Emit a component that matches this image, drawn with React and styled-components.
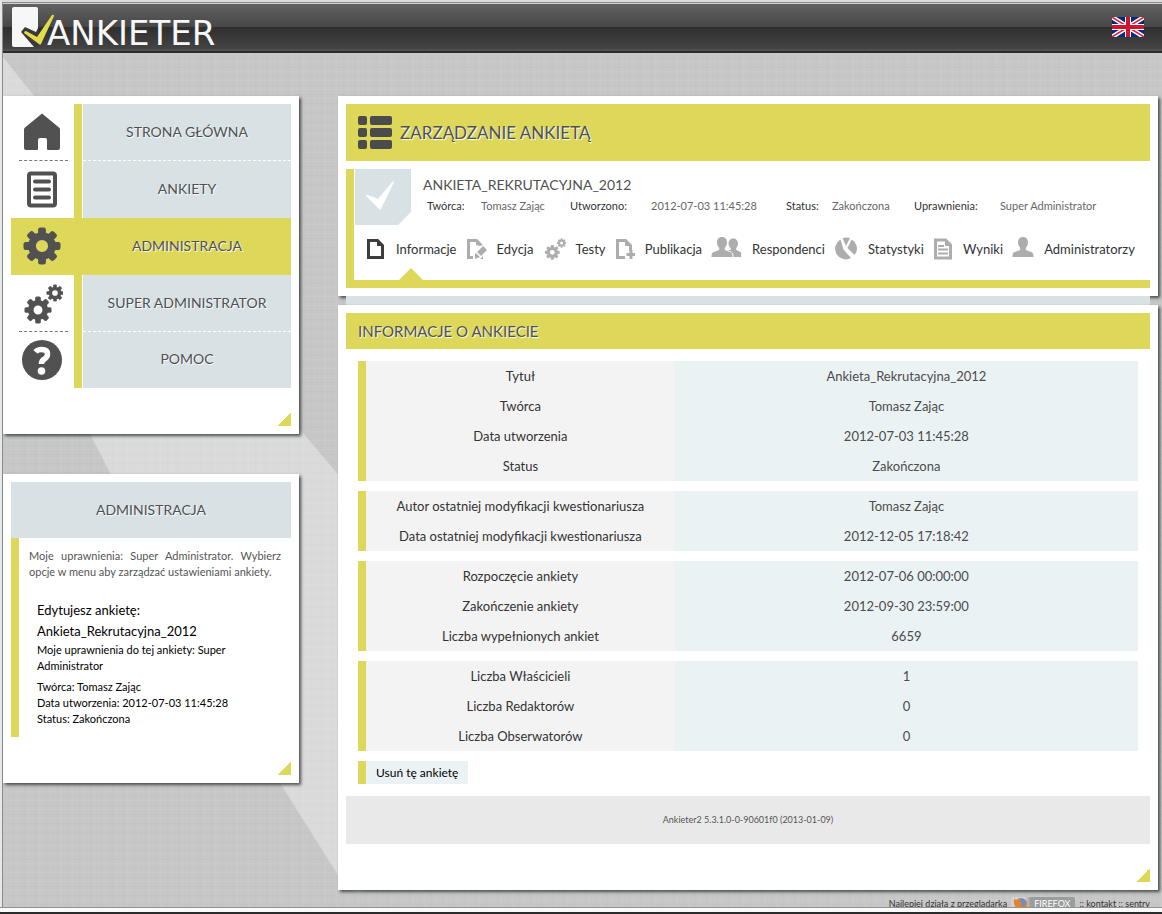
import React from 'react';
import styled, { createGlobalStyle, css } from 'styled-components';

const c = {
  lime: '#ddd85a',
  pale: '#d8e1e4',
  ink: '#515151',
  text: '#333',
  grey: '#adadad',
};

const GlobalStyle = createGlobalStyle`
  *, *::before, *::after { box-sizing: border-box; }
  body {
    margin: 0;
    background: #c5c5c5;
    color: ${c.text};
    font-family: Lato, "Liberation Sans", sans-serif;
    font-size: 14px;
  }
  a { color: inherit; text-decoration: none; }
  h1, h2, h3, p, ul, dl, dd { margin: 0; padding: 0; font-weight: 400; }
  ul { list-style: none; }
`;

const Shell = styled.div`
  position: relative;
  min-height: 100vh;
  overflow: hidden;
  border-top: 2px solid #dcdcdc;
  border-left: 2px solid #e6e9ec;
  background:
    repeating-linear-gradient(90deg, rgba(0, 0, 0, 0.015) 0 1px, transparent 1px 4px, rgba(255, 255, 255, 0.05) 4px 5px, transparent 5px 11px),
    repeating-linear-gradient(0deg, rgba(0, 0, 0, 0.015) 0 1px, transparent 1px 5px, rgba(255, 255, 255, 0.05) 5px 6px, transparent 6px 9px),
    #c7c7c7;
`;

const Frame = styled.div`
  position: relative;
  border-top: 1px solid #8b8b8b;
  border-left: 1px solid #8b8b8b;
`;

const Backdrop = styled.svg`
  position: absolute;
  left: 0;
  top: 0;
`;

const WindowEdge = styled.div`
  position: fixed;
  left: 0;
  right: 0;
  bottom: 0;
  height: 7px;
  border-top: 1px solid #939393;
  border-bottom: 2px solid #2b2b2b;
  background: #fafafa;
`;

const Header = styled.header`
  position: relative;
  display: flex;
  justify-content: space-between;
  align-items: center;
  height: 50px;
  padding: 0 18px 1px 9px;
  border-top: 1px solid #d0d0d0;
  border-bottom: 2px solid #2c2a2b;
  background: linear-gradient(#626262 0, #474747 48%, #2f2f2f 50%, #434343 94%, #565656 100%);
`;

const Logo = styled.a`
  display: flex;
  align-items: flex-end;
  height: 42px;
  color: #f7f7f7;
  font: 34px/30px "DejaVu Sans", sans-serif;
`;

const LogoMark = styled.svg`
  flex: none;
  margin-right: -11px;
`;

const Flag = styled.button`
  display: block;
  padding: 0;
  border: 0;
  background: none;
  cursor: pointer;
  svg { display: block; }
`;

const Columns = styled.div`
  position: relative;
  display: grid;
  grid-template-columns: 296px minmax(0, 1fr);
  column-gap: 39px;
  align-items: start;
  padding: 43px 4px 0 0;
`;

const Stack = styled.div`
  display: flex;
  flex-direction: column;
  gap: ${(p) => p.$gap}px;
  padding-bottom: 3px;
`;

const Panel = styled.section`
  padding: 8px;
  background: #fff;
  box-shadow: 2px 2px 3px rgba(30, 35, 35, 0.75);
`;

const Corner = styled.div`
  width: 14px;
  height: 14px;
  margin: 24px 0 0 auto;
  background: linear-gradient(135deg, transparent 50%, ${c.lime} 50%);
`;

const Menu = styled.ul`
  display: grid;
  grid-template-rows: repeat(4, minmax(57px, auto)) minmax(56px, auto);
`;

const MenuLink = styled.a`
  display: grid;
  grid-template-columns: 63px 8px 1fr;
  height: 100%;
  color: ${c.ink};
  text-shadow: 1px 1px 1px #fff;
  text-transform: uppercase;
  ${(p) => p.$active && css`background: ${c.lime};`}
`;

const MenuIcon = styled.span`
  display: flex;
  align-items: center;
  justify-content: center;
  width: 49px;
  margin: 0 6px 0 8px;
  padding-right: 4px;
  border-bottom: 1px dashed ${(p) => (p.$rule ? '#777' : 'transparent')};
`;

const MenuBar = styled.span`
  background: ${c.lime};
`;

const MenuLabel = styled.span`
  display: flex;
  align-items: center;
  justify-content: center;
  margin-left: 1px;
  padding-bottom: 2px;
  ${(p) => !p.$active && css`background: ${c.pale};`}
  border-bottom: 1px dashed ${(p) => (p.$rule ? '#fff' : 'transparent')};
`;

const SideTitle = styled.h2`
  padding: 18px 0;
  background: ${c.pale};
  color: ${c.ink};
  font-size: 14px;
  line-height: 20px;
  text-align: center;
  text-shadow: 1px 1px 1px #fff;
`;

const SideBody = styled.div`
  padding: 10px;
  border-left: 8px solid ${c.lime};
  color: #000;
  font-size: 11px;
  line-height: 16px;
`;

const Intro = styled.p`
  color: #555;
  text-align: justify;
`;

const Edited = styled.div`
  width: 200px;
  padding: 20px 0 0 8px;
`;

const EditedName = styled.h3`
  font-size: 13px;
  line-height: 21px;
`;

const EditedFacts = styled.div`
  padding-top: 5px;
`;

const Banner = styled.div`
  display: flex;
  align-items: center;
  gap: 8px;
  min-height: ${(p) => p.$height}px;
  padding: 0 12px;
  background: ${c.lime};
  color: ${c.ink};
  text-shadow: 1px 1px 1px #fff;
  h1, h2 { font-size: ${(p) => p.$size}px; line-height: 20px; }
`;

const Summary = styled.div`
  margin-top: 8px;
  border-left: 8px solid ${c.lime};
  border-bottom: 8px solid ${c.lime};
`;

const SummaryTop = styled.div`
  display: flex;
  gap: 12px;
  padding-left: 1px;
`;

const SurveyBadge = styled.svg`
  flex: none;
  display: block;
`;

const SurveyName = styled.h2`
  padding-top: 5px;
  color: ${c.ink};
  font-size: 14px;
  line-height: 21px;
`;

const Meta = styled.dl`
  display: grid;
  grid-template-columns: 54px 89px 81px 135px 46px 82px 86px auto;
  padding-left: 4px;
  font-size: 11px;
  line-height: 21px;
  white-space: nowrap;
  dd { color: #666; }
`;

const Tabs = styled.nav`
  display: flex;
  justify-content: space-between;
  padding: 8px 15px 16px 11px;
  font-size: 13px;
`;

const Tab = styled.a`
  position: relative;
  display: flex;
  align-items: center;
  gap: 10px;
  height: 31px;
  white-space: nowrap;
  ${(p) => p.$active && css`
    &::after {
      content: "";
      position: absolute;
      left: 50%;
      bottom: -16px;
      margin-left: -12px;
      border: solid transparent;
      border-width: 0 12px 12px;
      border-bottom-color: ${c.lime};
    }
  `}
`;

const TabIcon = styled.span`
  display: flex;
  flex: none;
  color: ${c.grey};
`;

const Joined = styled.div`
  height: 9px;
  margin: 0 8px;
  background: ${c.pale};
`;

const Groups = styled.div`
  display: flex;
  flex-direction: column;
  align-items: flex-start;
  gap: 10px;
  padding: 12px;
`;

const InfoTable = styled.table`
  width: 100%;
  border-left: 8px solid ${c.lime};
  border-spacing: 0;
  table-layout: fixed;
  font-size: 13px;
  text-align: center;
  th, td { height: 30px; padding: 0; line-height: 20px; }
  th { width: 40%; background: #f3f3f3; font-weight: 400; }
  td { background: #ebf2f3; color: #4c4c4c; }
`;

const RemoveButton = styled.button`
  height: 23px;
  padding: 0 10px;
  border: 0;
  border-left: 8px solid ${c.lime};
  background: #ebf2f4;
  color: #000;
  font: 12px/20px Lato, sans-serif;
  cursor: pointer;
`;

const Version = styled.footer`
  padding: 14px 0;
  background: #e9e9e9;
  color: #555;
  font-size: 9px;
  line-height: 20px;
  text-align: center;
`;

const Credits = styled.footer`
  position: relative;
  display: flex;
  justify-content: flex-end;
  align-items: center;
  gap: 4px;
  height: 21px;
  padding-right: 12px;
  font-size: 9px;
  line-height: 14px;
`;

const FirefoxBadge = styled.a`
  display: flex;
  align-items: center;
  gap: 6px;
  padding: 0 5px 0 2px;
  border-radius: 2px;
  background: linear-gradient(90deg, #d2d2d2 14px, #999d9c 20px);
  color: #fff;
`;

const angles = [0, 45, 90, 135, 180, 225, 270, 315];

function Gear({ cx, cy, r }) {
  const w = r * 0.42;
  return (
    <g transform={`translate(${cx} ${cy})`}>
      <circle r={r * 0.54} fill="none" stroke="currentColor" strokeWidth={r * 0.42} />
      {angles.map((a) => (
        <rect key={a} x={-w / 2} y={-r} width={w} height={r * 0.4} rx={r * 0.12} transform={`rotate(${a})`} fill="currentColor" />
      ))}
    </g>
  );
}

const HomeIcon = () => (
  <svg width="40" height="40" viewBox="0 0 40 40" fill="currentColor">
    <path d="M20 1.500 37 15.500q1 1 1 2V36q0 2-2 2H26q-1 0-1-1v-9q0-2-2-2h-5q-2 0-2 2v9q0 1-1 1H4q-2 0-2-2V17.500q0-1 1-2z" />
  </svg>
);
const ListIcon = () => (
  <svg width="40" height="40" viewBox="0 0 40 40">
    <rect x="7" y="4.500" width="26" height="32" rx="2" fill="none" stroke="currentColor" strokeWidth="4" />
    <path d="M13 12.500h14M13 20.500h14M13 28.500h14" stroke="currentColor" strokeWidth="4" strokeLinecap="round" />
  </svg>
);
const GearIcon = () => <svg width="40" height="40" viewBox="0 0 40 40"><Gear cx={20} cy={20} r={18.500} /></svg>;
const GearsIcon = ({ size = 42 }) => (
  <svg width={size} height={size} viewBox="0 0 42 42"><Gear cx={17} cy={28} r={13.500} /><Gear cx={34} cy={11} r={8.500} /></svg>
);
const HelpIcon = () => (
  <svg width="42" height="42" viewBox="0 0 42 42">
    <circle cx="21" cy="21" r="20" fill="currentColor" />
    <path d="M14.500 13q2-2.500 6-2.500 6 0 6 4.500 0 3-3 5-3 1.500-3 5" fill="none" stroke="#fff" strokeWidth="5.500" />
    <circle cx="20.500" cy="32" r="3.800" fill="#fff" />
  </svg>
);
const RowsIcon = () => (
  <svg width="34" height="34" viewBox="0 0 34 34" fill="#4b4b4b">
    {[0, 12, 24].map((y) => (
      <g key={y}>
        <rect x="0" y={y} width="9" height="9" rx="2" />
        <rect x="12" y={y} width="22" height="9" rx="2" />
      </g>
    ))}
  </svg>
);

const PageIcon = () => (
  <svg width="21" height="24" viewBox="0 0 21 24"><path d="M3.500 3.500h9l5 5v12h-14z" fill="none" stroke="#3d3d3d" strokeWidth="3" /><path d="M12 2v7h7z" fill="#3d3d3d" /></svg>
);
const EditIcon = () => (
  <svg width="21" height="24" viewBox="0 0 21 24"><path d="M7 20.500H2.500v-17h8l4 4" fill="none" stroke={c.grey} strokeWidth="3" /><path d="M10 2v6l4 1 3-1zM11 15l6-6 4 4-6 6zM10 16l4 4-5 2v-5zM14 22l3-3v3z" fill={c.grey} /></svg>
);
const PublishIcon = () => (
  <svg width="20" height="24" viewBox="0 0 20 24"><path d="M10 20.500H2.500v-17h8l5 5V14" fill="none" stroke={c.grey} strokeWidth="3" /><path d="M10 2v7h7z" fill={c.grey} /><path d="M16 13v9M11.500 17.500h8.500" stroke={c.grey} strokeWidth="3" /></svg>
);
const personPath = 'M11 1c3.300 0 5 2.200 5 5.500 0 2.600-1.200 4-2.200 5.500v2l6 2.300c1.200.6 1.700 1.700 1.700 4.700h-21c0-3 .5-4.100 1.700-4.700l6-2.300v-2C7.200 10.500 6 9.100 6 6.500 6 3.200 7.700 1 11 1z';
const PersonIcon = () => <svg width="22" height="25" viewBox="0 0 22 25"><path d={personPath} fill={c.grey} /></svg>;
const PeopleIcon = () => (
  <svg width="31" height="25" viewBox="0 0 31 25"><g fill={c.grey}><path d={personPath} /><path d="M17.500 7.500c0-3 2-5 4.500-5 3 0 5 2 5 5 0 2-.8 3.500-1.800 4.500V14l4 1.800c1 .6 1 2 1 5.200h-7.500q0-5-5.500-6.500l2.500-.8v-1.700c-1.200-1-2.200-2.500-2.200-4.500z" /></g></svg>
);
const ChartIcon = () => (
  <svg width="24" height="24" viewBox="0 0 24 24" fill={c.grey}><path d="M6.500 2.500 9.500 12.500l7.500 8.500A10.500 10.500 0 1 1 6.500 2.500z" /><path d="M8.500 1q4-1 7.500 0L12 9z" /><path d="M17.500 2.500q5.500 3 5.500 9.500 0 3-2.500 6l-7-7z" /></svg>
);
const ReportIcon = () => (
  <svg width="20" height="24" viewBox="0 0 20 24"><path d="M2.500 3h10l5 5v13h-15z" fill="none" stroke={c.grey} strokeWidth="3" /><path d="M5 9h6M5 12.500h10M5 16.500h10" stroke={c.grey} strokeWidth="2" /><path d="M12 2v7h7z" fill={c.grey} /></svg>
);

const UnionJack = () => (
  <svg width="32" height="20" viewBox="0 0 32 20">
    <path fill="#012a7c" d="M0 0h32v20H0z" />
    <path d="M0 0l32 20M32 0 0 20" stroke="#fff" strokeWidth="4.500" />
    <path d="M0 0l32 20M32 0 0 20" stroke="#d8203a" strokeWidth="1.500" />
    <path d="M16 0v20M0 10h32" stroke="#fff" strokeWidth="6" />
    <path d="M16 0v20M0 10h32" stroke="#d3142f" strokeWidth="4" />
  </svg>
);

const menu = [
  { label: 'Strona główna', Icon: HomeIcon, rule: true },
  { label: 'Ankiety', Icon: ListIcon },
  { label: 'Administracja', Icon: GearIcon, active: true },
  { label: 'Super administrator', Icon: GearsIcon, rule: true },
  { label: 'Pomoc', Icon: HelpIcon },
];

const tabs = [
  { label: 'Informacje', Icon: PageIcon, active: true },
  { label: 'Edycja', Icon: EditIcon },
  { label: 'Testy', Icon: () => <GearsIcon size={23} /> },
  { label: 'Publikacja', Icon: PublishIcon },
  { label: 'Respondenci', Icon: PeopleIcon },
  { label: 'Statystyki', Icon: ChartIcon },
  { label: 'Wyniki', Icon: ReportIcon },
  { label: 'Administratorzy', Icon: PersonIcon },
];

const groups = [
  [['Tytuł', 'Ankieta_Rekrutacyjna_2012'], ['Twórca', 'Tomasz Zając'], ['Data utworzenia', '2012-07-03 11:45:28'], ['Status', 'Zakończona']],
  [['Autor ostatniej modyfikacji kwestionariusza', 'Tomasz Zając'], ['Data ostatniej modyfikacji kwestionariusza', '2012-12-05 17:18:42']],
  [['Rozpoczęcie ankiety', '2012-07-06 00:00:00'], ['Zakończenie ankiety', '2012-09-30 23:59:00'], ['Liczba wypełnionych ankiet', '6659']],
  [['Liczba Właścicieli', '1'], ['Liczba Redaktorów', '0'], ['Liczba Obserwatorów', '0']],
];

export default function App() {
  return (
    <Shell>
      <GlobalStyle />
      <Frame>
        <Backdrop width="520" height="905" viewBox="0 0 520 905" aria-hidden="true">
          <path d="M0 54 300 430 520 690V860L372 884q-22 12-32-4L277 780 107 470 0 260z" fill="#fff" opacity="0.35" />
        </Backdrop>
        <Header>
          <Logo href="#">
            <LogoMark width="46" height="42" viewBox="0 0 46 42" aria-hidden="true">
              <path d="M2 1h22q2 0 2 2v36q0 2-2 2H2q-2 0-2-2V3q0-2 2-2z" fill="#f7f7f7" />
              <path d="M9 26l4-5 11 5L26 22v19h-4z" fill="#3a3a3a" />
              <path d="M12 27q0-2 2-2l11 6L40 9q2-1 2 1L29 38q-1 1-2 0z" fill="#e3dc4a" />
            </LogoMark>
            ANKIETER
          </Logo>
          <Flag type="button" aria-label="English"><UnionJack /></Flag>
        </Header>
        <Columns>
          <Stack $gap={40}>
            <Panel as="nav">
              <Menu>
                {menu.map(({ label, Icon, rule, active }) => (
                  <li key={label}>
                    <MenuLink href="#" $active={active}>
                      <MenuIcon $rule={rule}><Icon /></MenuIcon>
                      <MenuBar />
                      <MenuLabel $rule={rule} $active={active}>{label}</MenuLabel>
                    </MenuLink>
                  </li>
                ))}
              </Menu>
              <Corner />
            </Panel>
            <Panel>
              <SideTitle>ADMINISTRACJA</SideTitle>
              <SideBody>
                <Intro>Moje uprawnienia: Super Administrator. Wybierz opcje w menu aby zarządzać ustawieniami ankiety.</Intro>
                <Edited>
                  <EditedName>Edytujesz ankietę: Ankieta_Rekrutacyjna_2012</EditedName>
                  <p>Moje uprawnienia do tej ankiety: Super Administrator</p>
                  <EditedFacts>
                    <p>Twórca: Tomasz Zając</p>
                    <p>Data utworzenia: 2012-07-03 11:45:28</p>
                    <p>Status: Zakończona</p>
                  </EditedFacts>
                </Edited>
              </SideBody>
              <Corner />
            </Panel>
          </Stack>
          <Stack as="main" $gap={0}>
            <Panel>
              <Banner $height={57} $size={17}>
                <RowsIcon />
                <h1>ZARZĄDZANIE ANKIETĄ</h1>
              </Banner>
              <Summary>
                <SummaryTop>
                  <SurveyBadge width="56" height="56" viewBox="0 0 56 56" aria-hidden="true">
                    <path d="M0 0h56v43L43 56H0z" fill={c.pale} />
                    <path d="M11 27q0-1 2-1l10 4L37 13q2-1 2 0L26 40q-1 1-2 0z" fill="#fff" />
                  </SurveyBadge>
                  <div>
                    <SurveyName>ANKIETA_REKRUTACYJNA_2012</SurveyName>
                    <Meta>
                      <dt>Twórca:</dt><dd>Tomasz Zając</dd>
                      <dt>Utworzono:</dt><dd>2012-07-03 11:45:28</dd>
                      <dt>Status:</dt><dd>Zakończona</dd>
                      <dt>Uprawnienia:</dt><dd>Super Administrator</dd>
                    </Meta>
                  </div>
                </SummaryTop>
                <Tabs>
                  {tabs.map(({ label, Icon, active }) => (
                    <Tab key={label} href="#" $active={active}>
                      <TabIcon><Icon /></TabIcon>
                      {label}
                    </Tab>
                  ))}
                </Tabs>
              </Summary>
            </Panel>
            <Joined />
            <Panel>
              <Banner $height={36} $size={15}><h2>INFORMACJE O ANKIECIE</h2></Banner>
              <Groups>
                {groups.map((rows) => (
                  <InfoTable key={rows[0][0]}>
                    <tbody>
                      {rows.map(([name, value]) => (
                        <tr key={name}><th scope="row">{name}</th><td>{value}</td></tr>
                      ))}
                    </tbody>
                  </InfoTable>
                ))}
                <RemoveButton type="button">Usuń tę ankietę</RemoveButton>
              </Groups>
              <Version>Ankieter2 5.3.1.0-0-90601f0 (2013-01-09)</Version>
              <Corner />
            </Panel>
          </Stack>
        </Columns>
        <Credits>
          <span>Najlepiej działa z przeglądarką</span>
          <FirefoxBadge href="#">
            <svg width="15" height="14" viewBox="0 0 15 14" aria-hidden="true">
              <circle cx="8" cy="7" r="6" fill="#6f8fc4" />
              <path d="M1 2q2 1 3 1 3-2 5 0-3 0-2 2 2 0 2 2-2 0-1 2 3 1 5-2 0-3-1-5 3 3 2 7-2 5-7 4Q0 12 1 2z" fill="#e8822a" />
            </svg>
            FIREFOX
          </FirefoxBadge>
          <span>:: <a href="#">kontakt</a> :: <a href="#">sentry</a></span>
        </Credits>
      </Frame>
      <WindowEdge />
    </Shell>
  );
}
